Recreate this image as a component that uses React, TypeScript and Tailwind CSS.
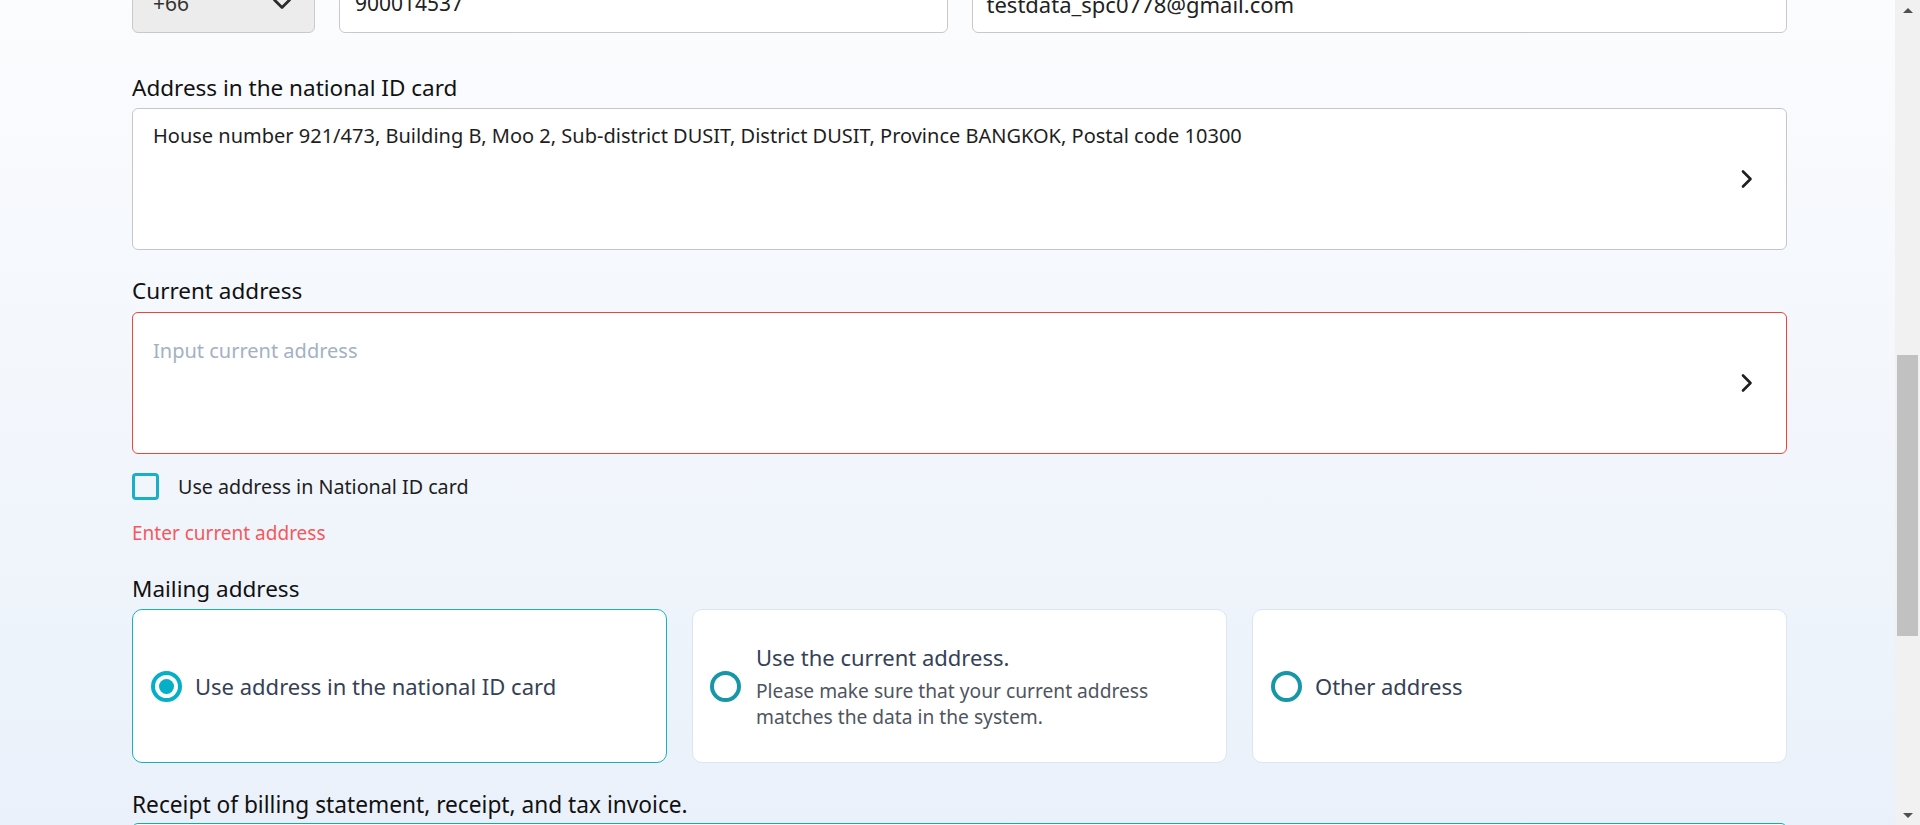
const font = { fontFamily: '"Noto Sans", "Open Sans", Arial, sans-serif' };

function ChevronRight() {
  return (
    <svg width="14" height="20" viewBox="0 0 14 20" fill="none" className="shrink-0">
      <path d="M3 2.5 L10.5 10 L3 17.5" stroke="#1f1f1f" strokeWidth="2.6" strokeLinecap="round" strokeLinejoin="round" />
    </svg>
  );
}

function ChevronDown() {
  return (
    <svg width="20" height="14" viewBox="0 0 20 14" fill="none">
      <path d="M2.5 3 L10 10.5 L17.5 3" stroke="#2b2b2b" strokeWidth="2.8" strokeLinecap="round" strokeLinejoin="round" />
    </svg>
  );
}

function Radio({ checked }: { checked?: boolean }) {
  return (
    <span
      className={
        "w-[31px] h-[31px] rounded-full border-[4px] flex items-center justify-center shrink-0 " +
        (checked ? "border-[#04afc8]" : "border-[#1796a8]")
      }
    >
      {checked && <span className="w-[15px] h-[15px] rounded-full bg-[#04afc8]" />}
    </span>
  );
}

function Scrollbar() {
  return (
    <div className="w-[25px] h-full bg-[#f1f1f1] flex flex-col items-center shrink-0">
      <div className="h-[20px] w-full flex items-center justify-center">
        <span className="w-0 h-0 border-l-[5px] border-r-[5px] border-b-[5px] border-l-transparent border-r-transparent border-b-[#505050]" />
      </div>
      <div className="flex-1 w-full px-[2px]">
        <div className="mt-[335px] h-[281px] w-full bg-[#c1c1c1]" />
      </div>
      <div className="h-[20px] w-full flex items-center justify-center">
        <span className="w-0 h-0 border-l-[5px] border-r-[5px] border-t-[5px] border-l-transparent border-r-transparent border-t-[#505050]" />
      </div>
    </div>
  );
}

export default function App() {
  return (
    <div className="w-full h-[825px] flex overflow-hidden" style={font}>
      <main className="flex-1 h-full bg-gradient-to-b from-[#fbfcfe] to-[#eaf1fa] pl-[132px] pr-[108px] overflow-hidden">
        {/* phone / email row, scrolled partly out of view */}
        <div className="mt-[-25px] grid grid-cols-2 gap-[24px] h-[58px]">
          <div className="flex gap-[24px]">
            <div className="w-[183px] h-full rounded-[6px] border border-[#c9c9c9] bg-[#ececec] flex items-center justify-between pl-[20px] pr-[22px]">
              <span className="text-[21px] text-[#333]">+66</span>
              <ChevronDown />
            </div>
            <div className="flex-1 h-full rounded-[6px] border border-[#c9c9c9] bg-white flex items-center px-[15px]">
              <span className="text-[21px] text-[#222]">900014537</span>
            </div>
          </div>
          <div className="h-full rounded-[6px] border border-[#c9c9c9] bg-white flex items-center px-[14px]">
            <span className="text-[22px] text-[#222]">testdata_spc0778@gmail.com</span>
          </div>
        </div>

        <p className="mt-[41px] text-[22.5px] leading-[28px] text-[#111]">Address in the national ID card</p>
        <div className="mt-[6px] h-[142px] rounded-[6px] border border-[#c6c6c6] bg-white flex items-center pl-[20px] pr-[32px]">
          <p className="flex-1 self-start mt-[14px] text-[20px] leading-[26px] text-[#1e1e1e]">
            House number 921/473, Building B, Moo 2, Sub-district DUSIT, District DUSIT, Province BANGKOK, Postal code 10300
          </p>
          <ChevronRight />
        </div>

        <p className="mt-[27px] text-[22.5px] leading-[28px] text-[#111]">Current address</p>
        <div className="mt-[7px] h-[142px] rounded-[6px] border border-[#f04438] bg-white flex items-center pl-[20px] pr-[32px]">
          <p className="flex-1 self-start mt-[25px] text-[20px] leading-[26px] text-[#a3b1c4]">Input current address</p>
          <ChevronRight />
        </div>

        <label className="mt-[19px] flex items-center gap-[19px]">
          <span className="w-[27px] h-[27px] rounded-[4px] border-[3px] border-[#17b0c7] bg-transparent shrink-0" />
          <span className="text-[19.7px] leading-[26px] text-[#1e1e1e]">Use address in National ID card</span>
        </label>
        <p className="mt-[20px] text-[19px] leading-[26px] text-[#f4585c]">Enter current address</p>

        <p className="mt-[29px] text-[22.5px] leading-[28px] text-[#111]">Mailing address</p>
        <div className="mt-[6px] grid grid-cols-3 gap-[25px] h-[154px]">
          <div className="rounded-[10px] border border-[#16b1c9] bg-white flex items-center pl-[18px] gap-[13px]">
            <Radio checked />
            <span className="text-[22px] text-[#354157]">Use address in the national ID card</span>
          </div>
          <div className="rounded-[10px] border border-[#dde5ef] bg-white flex items-center pl-[17px] gap-[15px]">
            <Radio />
            <div>
              <p className="text-[22px] leading-[28px] text-[#354157]">Use the current address.</p>
              <p className="mt-[7px] text-[19.2px] leading-[26px] text-[#4f5560]">
                Please make sure that your current address
                <br />
                matches the data in the system.
              </p>
            </div>
          </div>
          <div className="rounded-[10px] border border-[#dde5ef] bg-white flex items-center pl-[18px] gap-[13px]">
            <Radio />
            <span className="text-[22px] text-[#354157]">Other address</span>
          </div>
        </div>

        <p className="mt-[28px] text-[22.7px] leading-[28px] text-[#111]">Receipt of billing statement, receipt, and tax invoice.</p>
        <div className="mt-[4px] h-[120px] rounded-[6px] border border-[#04afc8] bg-white" />
      </main>
      <Scrollbar />
    </div>
  );
}
